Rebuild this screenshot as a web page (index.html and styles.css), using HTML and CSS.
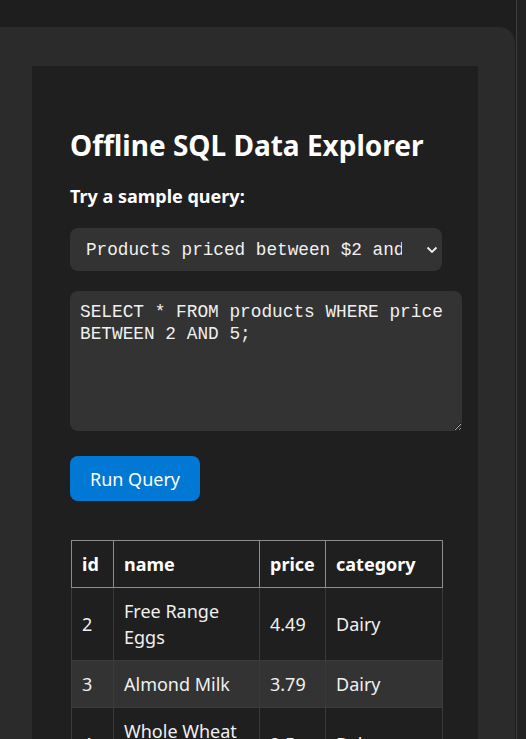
FILE: index.html
```html
<!DOCTYPE html>
<html>
<head>
<meta charset="utf-8">
<link rel="stylesheet" href="styles.css">
</head>
<body>
<div class="page">
  <div class="main">
    <div class="card">
      <div class="panel">
        <h1 class="title">Offline SQL Data Explorer</h1>
        <h2 class="label">Try a sample query:</h2>
        <div class="select-wrap">
          <select class="sample">
            <option>Products priced between $2 and $5</option>
          </select>
          <svg class="chev" width="12" height="8" viewBox="0 0 12 8"><path d="M1.5 1.5 L6 6 L10.5 1.5" fill="none" stroke="#f0f0f0" stroke-width="1.8"/></svg>
        </div>
        <textarea class="query">SELECT * FROM products WHERE price BETWEEN 2 AND 5;</textarea>
        <button class="run">Run Query</button>
        <table class="results">
          <colgroup>
            <col class="c-id"><col class="c-name"><col class="c-price"><col class="c-cat">
          </colgroup>
          <thead>
            <tr><th>id</th><th>name</th><th>price</th><th>category</th></tr>
          </thead>
          <tbody>
            <tr><td>2</td><td>Free Range Eggs</td><td>4.49</td><td>Dairy</td></tr>
            <tr><td>3</td><td>Almond Milk</td><td>3.79</td><td>Dairy</td></tr>
            <tr><td>4</td><td>Whole Wheat Bread</td><td>2.5</td><td>Bakery</td></tr>
          </tbody>
        </table>
      </div>
    </div>
  </div>
  <div class="gutter"></div>
</div>
</body>
</html>
```

FILE: styles.css
```css
* { box-sizing: border-box; }
html, body { margin: 0; padding: 0; background: #1e1e1e; height: 100%; overflow: hidden; }
body { font-family: "Noto Sans", "Open Sans", sans-serif; color: #f2f2f2; }
.page { display: flex; height: 739px; }
.main { width: 516px; padding-top: 27px; overflow: hidden; }
.gutter { width: 10px; border-left: 1px solid #3c3c3c; background: #222; }
.card {
  margin-left: -16px;
  width: 531px;
  height: 800px;
  background: #2b2b2b;
  border-radius: 16px;
  padding: 39px 0 0 48px;
}
.panel {
  width: 446px;
  height: 800px;
  background: #1f1f1f;
  padding: 61px 36px 0 38px;
}
.title {
  margin: 0 0 21px;
  font-size: 28px;
  line-height: 36px;
  font-weight: 700;
  color: #fff;
}
.label {
  margin: 0 0 20px;
  font-size: 18px;
  line-height: 24px;
  font-weight: 700;
  color: #fff;
}
.select-wrap { position: relative; width: 372px; }
.sample {
  appearance: none;
  -webkit-appearance: none;
  display: block;
  width: 372px;
  height: 43px;
  border: 0;
  border-radius: 8px;
  background: #333;
  color: #f0f0f0;
  font-family: "Liberation Mono", "DejaVu Sans Mono", monospace;
  font-size: 17.7px;
  padding: 0 40px 0 16px;
  outline: none;
}
.chev { position: absolute; right: 4px; top: 18px; }
.query {
  display: block;
  margin-top: 20px;
  width: 392px;
  height: 140px;
  border: 0;
  border-radius: 8px;
  background: #333;
  color: #f0f0f0;
  font-family: "Liberation Mono", "DejaVu Sans Mono", monospace;
  font-size: 17.8px;
  line-height: 22px;
  padding: 10px;
  resize: vertical;
  outline: none;
}
.run {
  display: block;
  margin-top: 25px;
  width: 130px;
  height: 45px;
  border: 0;
  border-radius: 8px;
  background: #0078d4;
  color: #fff;
  font-family: "Noto Sans", "Open Sans", sans-serif;
  font-size: 18px;
  padding: 0;
}
.results {
  margin-top: 39px;
  margin-left: 1px;
  border-collapse: collapse;
  table-layout: fixed;
  width: 371px;
  font-size: 18px;
  line-height: 26px;
}
.c-id { width: 42px; }
.c-name { width: 146px; }
.c-price { width: 66px; }
.c-cat { width: 117px; }
.results th, .results td {
  padding: 10px;
  text-align: left;
  vertical-align: middle;
}
.results th {
  border: 1px solid #8c8c8c;
  font-weight: 700;
  color: #fff;
}
.results td {
  border: 1px solid #3a3a3a;
  color: #f0f0f0;
}
.results tbody tr:nth-child(even) td { background: #333; }
```
